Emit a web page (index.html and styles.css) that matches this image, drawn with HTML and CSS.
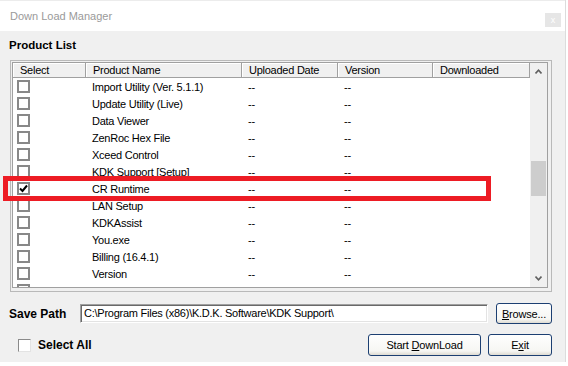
FILE: index.html
```html
<!DOCTYPE html>
<html lang="en">
  <head>
    <meta charset="UTF-8" />
    <title>Down Load Manager</title>
    <link rel="stylesheet" href="styles.css">
  </head>
  <body>
    <div class="window">
      <div class="titlebar">
        <span class="title">Down Load Manager</span>
        <span class="close">x</span>
      </div>

      <div class="content">
        <h2 class="section-title">Product List</h2>

        <div class="grid-frame">
          <div class="grid">
            <div class="grid-body">
              <div class="grid-head">
                <div>Select</div>
                <div>Product Name</div>
                <div>Uploaded Date</div>
                <div>Version</div>
                <div>Downloaded</div>
              </div>
              <div class="grid-row"><div class="cb-cell"><span class="cb"></span></div><div>Import Utility (Ver. 5.1.1)</div><div>--</div><div>--</div><div></div></div>
              <div class="grid-row"><div class="cb-cell"><span class="cb"></span></div><div>Update Utility (Live)</div><div>--</div><div>--</div><div></div></div>
              <div class="grid-row"><div class="cb-cell"><span class="cb"></span></div><div>Data Viewer</div><div>--</div><div>--</div><div></div></div>
              <div class="grid-row"><div class="cb-cell"><span class="cb"></span></div><div>ZenRoc Hex File</div><div>--</div><div>--</div><div></div></div>
              <div class="grid-row"><div class="cb-cell"><span class="cb"></span></div><div>Xceed Control</div><div>--</div><div>--</div><div></div></div>
              <div class="grid-row"><div class="cb-cell"><span class="cb"></span></div><div>KDK Support [Setup]</div><div>--</div><div>--</div><div></div></div>
              <div class="grid-row"><div class="cb-cell"><span class="cb checked"><svg width="9" height="9" viewBox="0 0 9 9"><path d="M1 4.5 L3.5 7 L8 1.5" fill="none" stroke="#000" stroke-width="2"/></svg></span></div><div>CR Runtime</div><div>--</div><div>--</div><div></div></div>
              <div class="grid-row"><div class="cb-cell"><span class="cb"></span></div><div>LAN Setup</div><div>--</div><div>--</div><div></div></div>
              <div class="grid-row"><div class="cb-cell"><span class="cb"></span></div><div>KDKAssist</div><div>--</div><div>--</div><div></div></div>
              <div class="grid-row"><div class="cb-cell"><span class="cb"></span></div><div>You.exe</div><div>--</div><div>--</div><div></div></div>
              <div class="grid-row"><div class="cb-cell"><span class="cb"></span></div><div>Billing (16.4.1)</div><div>--</div><div>--</div><div></div></div>
              <div class="grid-row"><div class="cb-cell"><span class="cb"></span></div><div>Version</div><div>--</div><div>--</div><div></div></div>
              <div class="grid-row"><div class="cb-cell"><span class="cb"></span></div><div>FHReports</div><div>--</div><div>--</div><div></div></div>
            </div>
            <div class="vscroll">
              <div class="scroll-btn">
                <svg width="7" height="5" viewBox="0 0 7 5"><polyline points="0.5,4.5 3.5,1.2 6.5,4.5" fill="none" stroke="#606060" stroke-width="1.6"/></svg>
              </div>
              <div class="scroll-track"><div class="scroll-thumb"></div></div>
              <div class="scroll-btn">
                <svg width="7" height="5" viewBox="0 0 7 5"><polyline points="0.5,0.5 3.5,3.8 6.5,0.5" fill="none" stroke="#606060" stroke-width="1.6"/></svg>
              </div>
            </div>
          </div>
        </div>

        <div class="path-row">
          <span class="label-bold path-label">Save Path</span>
          <div class="path-input">C:\Program Files (x86)\K.D.K. Software\KDK Support\</div>
          <button class="btn btn-browse"><u>B</u>rowse...</button>
        </div>

        <div class="bottom-row">
          <span class="cb-3d"></span>
          <span class="label-bold select-all">Select All</span>
          <button class="btn btn-start">Start <u>D</u>ownLoad</button>
          <button class="btn btn-exit">E<u>x</u>it</button>
        </div>
      </div>

      <div class="highlight-box"></div>
    </div>
  </body>
</html>
```

FILE: styles.css
```css
* {
  box-sizing: border-box;
}
body {
  margin: 0;
  background: #fff;
  font-family: "Liberation Sans", Arial, sans-serif;
  font-size: 11px;
  color: #000;
}
.window {
  position: relative;
  width: 566px;
  height: 362px;
  background: #f0f0f0;
  border-right: 1px solid #dcdcdc;
}
.titlebar {
  height: 31px;
  background: #fff;
  border-top: 1px solid #ececec;
  display: flex;
  align-items: center;
  justify-content: space-between;
  padding: 0 4px 0 10px;
}
.title {
  color: #9a9a9a;
  font-size: 11px;
}
.close {
  align-self: flex-start;
  margin-top: 12px;
  width: 16px;
  height: 14px;
  background: #e6e6e6;
  color: #fff;
  font-size: 9px;
  display: flex;
  align-items: center;
  justify-content: center;
}
.content {
  padding: 7px 13px 0 9px;
}
.section-title {
  margin: 0;
  font-size: 11.5px;
  font-weight: bold;
  line-height: 14px;
}
.grid-frame {
  margin: 8px 0 0 1px;
  width: 542px;
  border: 1px solid #b9b9b9;
  padding: 1px 3px 3px 1px;
}
.grid {
  display: flex;
  height: 226px;
  border: 1px solid #a0a0a0;
  background: #fff;
  overflow: hidden;
}
.grid-body {
  width: 517px;
}
.grid-head,
.grid-row {
  display: grid;
  grid-template-columns: 73px 156px 96px 95px 97px;
  letter-spacing: -0.25px;
}
.grid-head {
  height: 15px;
  background: #f0f0f0;
  border-bottom: 1px solid #a0a0a0;
}
.grid-head div {
  border-right: 1px solid #a0a0a0;
  box-shadow: inset 1px 1px #fff;
  padding-left: 7px;
  line-height: 14px;
}
.grid-row {
  height: 17px;
  align-items: center;
}
.grid-row div {
  padding-left: 6px;
  white-space: nowrap;
}
.grid-row .cb-cell {
  padding-left: 4px;
  display: flex;
}
.cb {
  width: 13px;
  height: 13px;
  border: 2px solid #888;
  background: #fff;
  display: flex;
  align-items: center;
  justify-content: center;
}
.vscroll {
  width: 17px;
  background: #f0f0f0;
  display: flex;
  flex-direction: column;
}
.scroll-btn {
  height: 17px;
  display: flex;
  align-items: center;
  justify-content: center;
}
.scroll-track {
  flex: 1;
  padding: 0 1px;
}
.scroll-thumb {
  margin-top: 81px;
  height: 35px;
  background: #cdcdcd;
}
.path-row {
  display: flex;
  align-items: center;
  height: 21px;
  margin-top: 11px;
}
.label-bold {
  font-weight: bold;
  font-size: 12px;
}
.path-label {
  width: 71px;
}
.path-input {
  width: 408px;
  height: 19px;
  margin-right: 8px;
  padding-left: 3px;
  line-height: 17px;
  letter-spacing: -0.25px;
  background: #fff;
  border: 1px solid;
  border-color: #a0a0a0 #fff #fff #a0a0a0;
  box-shadow: inset 1px 1px #696969, inset -1px -1px #e3e3e3;
  white-space: nowrap;
  overflow: hidden;
}
.btn {
  font-family: "Liberation Sans", Arial, sans-serif;
  font-size: 11px;
  letter-spacing: -0.2px;
  color: #000;
  padding: 0;
  border: 1px solid #1c3f72;
  border-radius: 3px;
  background: linear-gradient(#fefefe, #f6f6f3 80%, #dedbd2);
}
.btn-browse {
  width: 56px;
  height: 21px;
}
.bottom-row {
  display: flex;
  align-items: center;
  height: 22px;
  margin-top: 10px;
}
.cb-3d {
  width: 13px;
  height: 13px;
  margin-left: 9px;
  background: #fff;
  border: 1px solid;
  border-color: #8a8a8a #e3e3e3 #e3e3e3 #8a8a8a;
}
.select-all {
  margin-left: 7px;
}
.btn-start {
  margin-left: auto;
  width: 113px;
  height: 22px;
}
.btn-exit {
  margin-left: 7px;
  width: 64px;
  height: 22px;
}
.highlight-box {
  position: absolute;
  left: 3px;
  top: 176px;
  width: 488px;
  height: 25px;
  border: 5px solid #ed1c24;
}
```
